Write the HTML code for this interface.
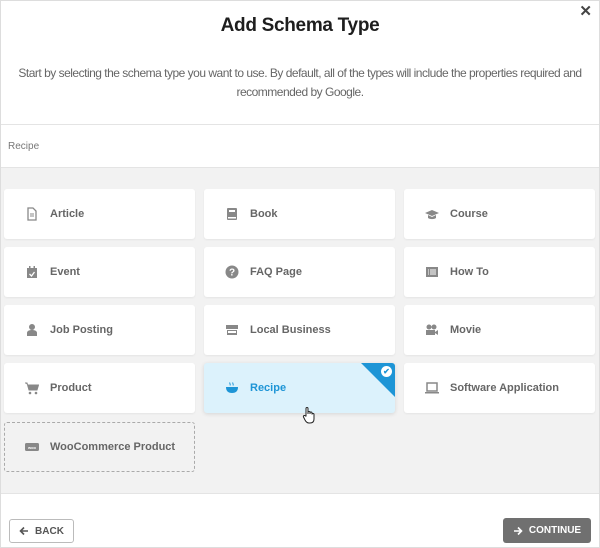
<!DOCTYPE html>
<html><head><style>
*{box-sizing:border-box;margin:0;padding:0}
body{width:600px;height:548px;overflow:hidden;background:#fff;font-family:"Liberation Sans",Arial,sans-serif;position:relative}
.frame{position:absolute;left:0;top:0;width:600px;height:548px;border:1px solid #ddd;pointer-events:none;z-index:5}
.title{position:absolute;top:15px;left:0;width:600px;text-align:center;font-size:19px;font-weight:bold;color:#1e1e1e;letter-spacing:-0.3px}
.x{position:absolute;top:2px;right:8px;font-size:15px;font-weight:bold;color:#444}
.desc{position:absolute;top:64px;left:14px;width:572px;text-align:center;font-size:12px;line-height:19px;color:#666;letter-spacing:-0.5px}
.l1{position:absolute;top:124px;left:0;width:600px;height:1px;background:#e4e4e4}
.search{position:absolute;top:141px;left:8px;font-size:10px;color:#777}
.gray{position:absolute;top:167px;left:0;width:600px;height:327px;background:#f2f2f2;border-top:1px solid #e4e4e4;border-bottom:1px solid #e4e4e4}
.card{position:absolute;width:191px;height:50px;background:#fff;border-radius:3px;box-shadow:0 1px 2px rgba(0,0,0,.06);font-size:11px;font-weight:bold;color:#666;display:flex;align-items:center;padding-left:46px}
.card svg{position:absolute;left:21px;top:18px;width:14px;height:14px}
.sel{background:#dcf2fc;color:#1e95d6;overflow:hidden;box-shadow:0 1px 4px rgba(0,0,0,.12)}
.dash{background:transparent;border:1px dashed #aaa;box-shadow:none;padding-left:45px}
.btn{position:absolute;border-radius:3px;font-size:10px;font-weight:bold;display:flex;align-items:center;justify-content:center}
</style></head><body>
<div class="frame"></div>
<div class="title">Add Schema Type</div>
<div class="x">✕</div>
<div class="desc">Start by selecting the schema type you want to use. By default, all of the types will include the properties required and<br>recommended by Google.</div>
<div class="l1"></div>
<div class="search">Recipe</div>
<div class="gray"></div>

<div class="card" style="left:4px;top:189px"><svg viewBox="0 0 14 14"><path d="M3 1h5l3 3v9H3z" fill="none" stroke="#888" stroke-width="1.3"/><path d="M5 7h4M5 9h4" stroke="#888"/></svg>Article</div>
<div class="card" style="left:204px;top:189px"><svg viewBox="0 0 14 14"><rect x="2" y="1" width="10" height="12" rx="1" fill="#888"/><rect x="4" y="3" width="6" height="2" fill="#fff"/><rect x="3" y="10" width="8" height="1.5" fill="#fff"/></svg>Book</div>
<div class="card" style="left:404px;top:189px"><svg viewBox="0 0 14 14"><path d="M0 6l7-3 7 3-7 3z M3 8v3c2 1.5 6 1.5 8 0V8L7 10z" fill="#888"/></svg>Course</div>

<div class="card" style="left:4px;top:247px"><svg viewBox="0 0 14 14"><rect x="2" y="3" width="10" height="10" fill="#888"/><rect x="4" y="1" width="1.5" height="3" fill="#888"/><rect x="8.5" y="1" width="1.5" height="3" fill="#888"/><path d="M4.5 9l2 2 3-4" stroke="#fff" fill="none" stroke-width="1.3"/></svg>Event</div>
<div class="card" style="left:204px;top:247px"><svg viewBox="0 0 14 14"><circle cx="7" cy="7" r="6.5" fill="#888"/><text x="7" y="10.5" font-size="10" font-weight="bold" fill="#fff" text-anchor="middle" font-family="Liberation Sans">?</text></svg>FAQ Page</div>
<div class="card" style="left:404px;top:247px"><svg viewBox="0 0 14 14"><rect x="1" y="2" width="12" height="10" fill="#888"/><path d="M3 5h1M5 5h6M3 7h1M5 7h6M3 9h1M5 9h6" stroke="#fff"/></svg>How To</div>

<div class="card" style="left:4px;top:305px"><svg viewBox="0 0 14 14"><circle cx="7" cy="4" r="3" fill="#888"/><path d="M2 13v-3c0-2 2-3 5-3s5 1 5 3v3z" fill="#888"/></svg>Job Posting</div>
<div class="card" style="left:204px;top:305px"><svg viewBox="0 0 14 14"><rect x="1" y="2" width="12" height="4" fill="#888"/><rect x="2" y="7" width="10" height="5" fill="#888"/><rect x="3" y="8" width="8" height="2" fill="#fff"/></svg>Local Business</div>
<div class="card" style="left:404px;top:305px"><svg viewBox="0 0 14 14"><circle cx="4" cy="4" r="2.5" fill="#888"/><circle cx="9" cy="4" r="2.5" fill="#888"/><rect x="1" y="7" width="9" height="5" fill="#888"/><path d="M10 9l3-2v5l-3-2z" fill="#888"/></svg>Movie</div>

<div class="card" style="left:4px;top:363px"><svg viewBox="0 0 14 14"><path d="M0 2h2l2 7h8l1.5-5H3" fill="#888" stroke="#888"/><circle cx="5" cy="12" r="1.3" fill="#888"/><circle cx="11" cy="12" r="1.3" fill="#888"/></svg>Product</div>
<div class="card sel" style="left:204px;top:363px"><svg viewBox="0 0 14 14"><path d="M1 6h12c0 4-2 6-6 6S1 10 1 6z" fill="#1e95d6"/><path d="M5 1.5c-1 1 1 1.5 0 3M8 1.5c-1 1 1 1.5 0 3" stroke="#1e95d6" fill="none"/></svg>Recipe
<div style="position:absolute;right:0;top:0;width:0;height:0;border-left:34px solid transparent;border-top:34px solid #1e95d6;border-right:0"></div>
<div style="position:absolute;right:3px;top:3px;width:11px;height:11px;border-radius:50%;background:#fff;color:#1e95d6;font-size:8px;line-height:11px;text-align:center">✔</div>
</div>
<div class="card" style="left:404px;top:363px"><svg viewBox="0 0 14 14"><rect x="2" y="2" width="10" height="8" fill="none" stroke="#888" stroke-width="1.5"/><rect x="0" y="11" width="14" height="1.5" fill="#888"/></svg>Software Application</div>

<div class="card dash" style="left:4px;top:422px"><svg viewBox="0 0 14 14" style="left:20px;top:17px"><rect x="0" y="3" width="14" height="8" rx="1.5" fill="#888"/><text x="7" y="9" font-size="4" fill="#fff" text-anchor="middle" font-family="Liberation Sans">woo</text></svg>WooCommerce Product</div>

<svg style="position:absolute;left:302px;top:406px" width="14" height="18" viewBox="0 0 14 18"><path d="M4 10V2.5a1 1 0 0 1 2 0V8V6.5a1 1 0 0 1 2 0V8V7a1 1 0 0 1 2 0v1.5a1 1 0 0 1 2 0V13c0 2.5-1.5 4-4 4H7c-2 0-3-1-4-3L1.5 11a1 1 0 0 1 1.8-1z" fill="#fff" stroke="#222" stroke-width="1"/></svg>

<div class="btn" style="left:9px;top:519px;width:65px;height:24px;border:1px solid #bbb;color:#555;background:#fff"><svg width="10" height="10" viewBox="0 0 10 10" style="margin-right:6px"><path d="M9 5H1.5M5 1.5L1.5 5 5 8.5" stroke="#555" stroke-width="1.6" fill="none"/></svg>BACK</div>
<div class="btn" style="left:503px;top:518px;width:88px;height:25px;background:#707070;color:#fff"><svg width="10" height="10" viewBox="0 0 10 10" style="margin-right:6px"><path d="M1 5h7.5M5 1.5L8.5 5 5 8.5" stroke="#fff" stroke-width="1.6" fill="none"/></svg>CONTINUE</div>
</body></html>
